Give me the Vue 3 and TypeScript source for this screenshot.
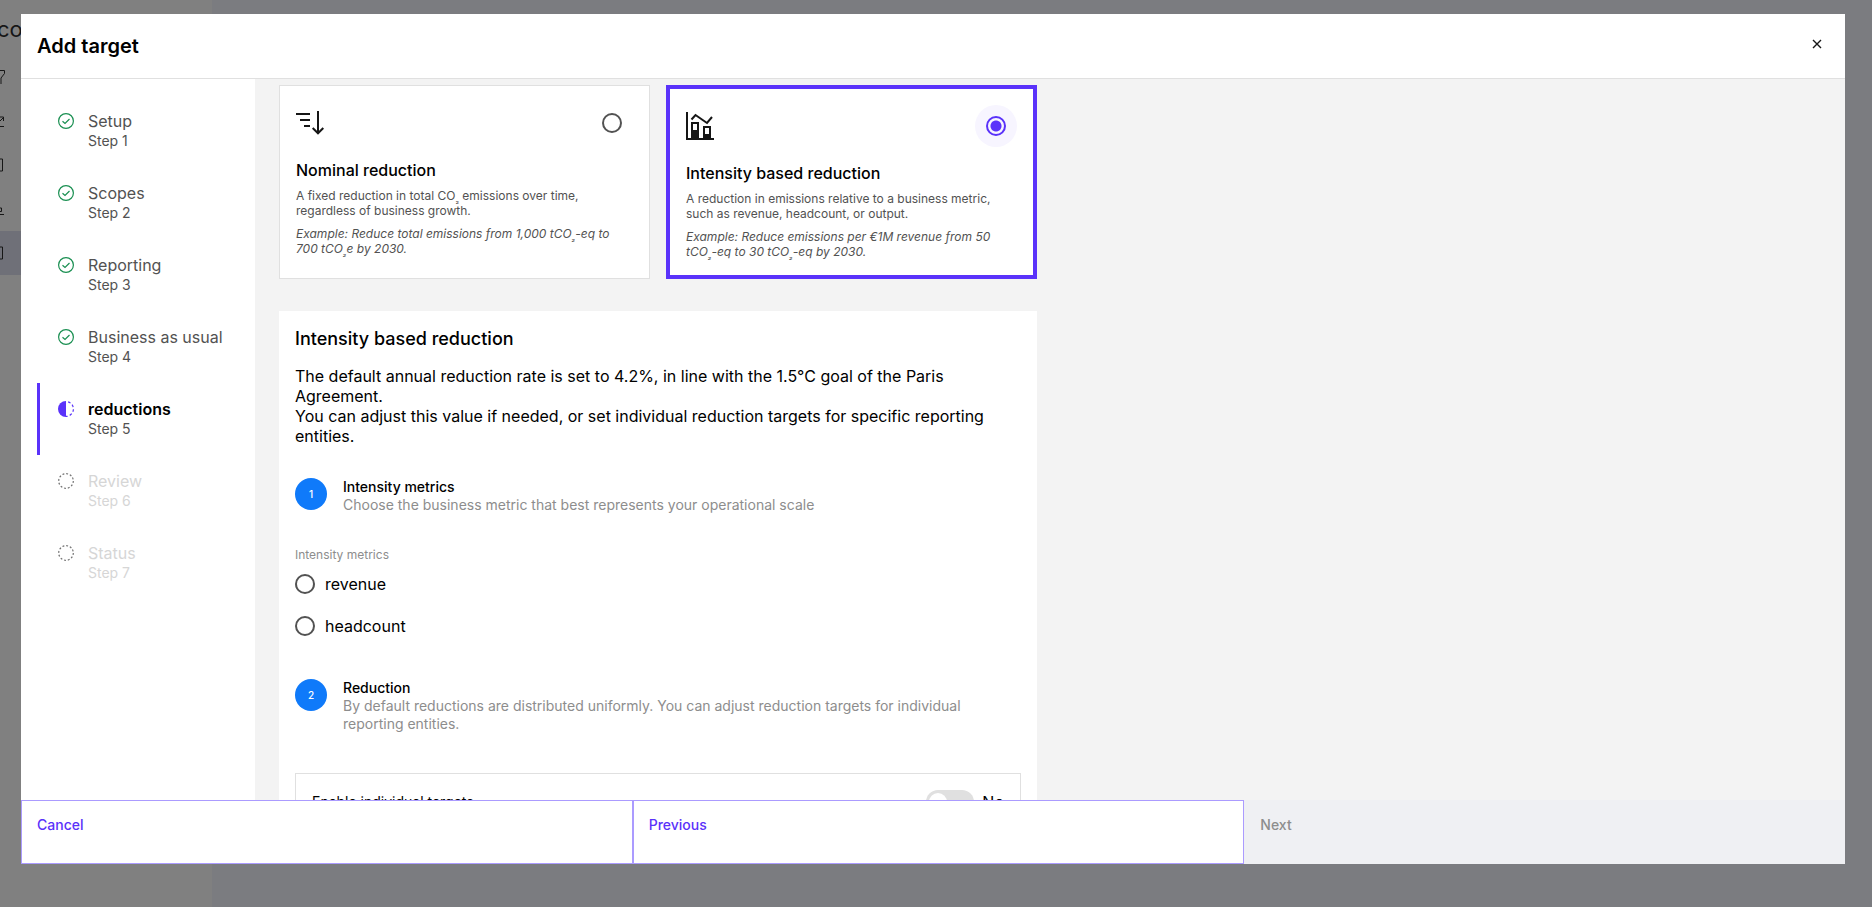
<script setup lang="ts">
import { ref } from 'vue'

type StepState = 'done' | 'current' | 'todo'

interface Step {
  title: string
  state: StepState
}

const steps: Step[] = [
  { title: 'Setup', state: 'done' },
  { title: 'Scopes', state: 'done' },
  { title: 'Reporting', state: 'done' },
  { title: 'Business as usual', state: 'done' },
  { title: 'reductions', state: 'current' },
  { title: 'Review', state: 'todo' },
  { title: 'Status', state: 'todo' },
]

const metrics: string[] = ['revenue', 'headcount']

const reductionType = ref<'nominal' | 'intensity'>('intensity')
const metric = ref<string>('')
const individual = ref<boolean>(false)
</script>

<template>
  <div class="page">
    <aside class="rail">
      <div class="brand">co</div>
      <div class="rail-item">
        <svg width="6" height="16" viewBox="0 0 6 16"><path d="M0 1.500h4.500v3L1 9v6" /></svg>
      </div>
      <div class="rail-item">
        <svg width="6" height="16" viewBox="0 0 6 16"><path d="M0 8l3.500-3.500M0 4h3.500v4M0 13.500h4" /></svg>
      </div>
      <div class="rail-item">
        <svg width="6" height="16" viewBox="0 0 6 16"><path d="M0 2h2.500v12H0" /></svg>
      </div>
      <div class="rail-item">
        <svg width="6" height="16" viewBox="0 0 6 16"><path d="M0 7h1.500v3.500H0M0 13.500h4" /></svg>
      </div>
      <div class="rail-item active">
        <svg width="6" height="16" viewBox="0 0 6 16"><path d="M0 2h2.500v12H0" /></svg>
      </div>
    </aside>
    <div class="backdrop-main"></div>
  </div>

  <div class="overlay">
    <section class="modal" role="dialog" aria-labelledby="dialog-title">
      <header class="modal-header">
        <h1 id="dialog-title">Add target</h1>
        <button class="close" type="button" aria-label="Close">
          <svg width="10" height="10" viewBox="0 0 10 10"><path d="M1 1l8 8M9 1l-8 8" /></svg>
        </button>
      </header>

      <div class="modal-body">
        <nav class="steps">
          <a v-for="(step, i) in steps" :key="step.title" href="#" class="step" :class="step.state">
            <svg class="step-icon" width="16" height="16" viewBox="0 0 16 16">
              <template v-if="step.state === 'done'">
                <circle cx="8" cy="8" r="7.400" />
                <path d="M4.500 8.200l2.500 2.300 4.500-4.500" />
              </template>
              <template v-else-if="step.state === 'current'">
                <path class="solid" d="M8 0a8 8 0 0 0 0 16z" />
                <path d="M8 .6a7.400 7.400 0 0 1 0 14.800" stroke-dasharray="2.600 2.200" stroke-dashoffset="-2.200" />
              </template>
              <circle v-else cx="8" cy="8" r="7.300" stroke-dasharray="1.900 1.920" />
            </svg>
            <span class="step-text">
              <span class="step-title">{{ step.title }}</span>
              <span class="step-sub">Step {{ i + 1 }}</span>
            </span>
          </a>
        </nav>

        <main class="content">
          <div class="column">
            <div class="cards">
              <label class="card" :class="{ selected: reductionType === 'nominal' }">
                <span class="card-top">
                  <svg width="32" height="32" viewBox="0 0 32 32" fill="none" stroke="#161616" stroke-width="2">
                    <path d="M0 7h14M4 13h10M8 19h6" />
                    <path d="M22 4v22M16.700 21l5.300 5.300L27.300 21" />
                  </svg>
                  <span class="radio-halo">
                    <input v-model="reductionType" class="radio" type="radio" name="type" value="nominal" />
                  </span>
                </span>
                <span class="card-title">Nominal reduction</span>
                <span class="card-text">A fixed reduction in total CO<sub>₂</sub> emissions over time, regardless of business growth.</span>
                <span class="card-text example">Example: Reduce total emissions from 1,000 tCO<sub>₂</sub>-eq to 700 tCO<sub>₂</sub>e by 2030.</span>
              </label>

              <label class="card" :class="{ selected: reductionType === 'intensity' }">
                <span class="card-top">
                  <svg width="32" height="32" viewBox="0 0 32 32" fill="none" stroke="#161616" stroke-width="2">
                    <path d="M1 2v27h27" />
                    <path d="M5.500 9.500l4-4.500 11.500 8 5-6" />
                    <path d="M6 29V13h6v16M18 29V17h6v12" />
                    <path d="M5 20h8v9H5zM17 24h8v5h-8z" fill="#161616" stroke="none" />
                  </svg>
                  <span class="radio-halo">
                    <input v-model="reductionType" class="radio" type="radio" name="type" value="intensity" />
                  </span>
                </span>
                <span class="card-title">Intensity based reduction</span>
                <span class="card-text">A reduction in emissions relative to a business metric, such as revenue, headcount, or output.</span>
                <span class="card-text example">Example: Reduce emissions per €1M revenue from 50 tCO<sub>₂</sub>-eq to 30 tCO<sub>₂</sub>-eq by 2030.</span>
              </label>
            </div>

            <section class="panel">
              <h2>Intensity based reduction</h2>
              <p class="intro">
                The default annual reduction rate is set to 4.2%, in line with the 1.5°C goal of the Paris Agreement.<br />
                You can adjust this value if needed, or set individual reduction targets for specific reporting entities.
              </p>

              <div class="stage">
                <span class="badge">1</span>
                <div>
                  <h3>Intensity metrics</h3>
                  <p>Choose the business metric that best represents your operational scale</p>
                </div>
              </div>

              <fieldset class="metrics">
                <legend>Intensity metrics</legend>
                <label v-for="m in metrics" :key="m" class="metric">
                  <input v-model="metric" class="radio" type="radio" name="metric" :value="m" />
                  {{ m }}
                </label>
              </fieldset>

              <div class="stage">
                <span class="badge">2</span>
                <div>
                  <h3>Reduction</h3>
                  <p>By default reductions are distributed uniformly. You can adjust reduction targets for individual reporting entities.</p>
                </div>
              </div>

              <div class="toggle-box">
                <label for="individual" class="toggle-label">Enable individual targets</label>
                <span class="toggle">
                  <input id="individual" v-model="individual" class="switch" type="checkbox" role="switch" />
                  <span>{{ individual ? 'Yes' : 'No' }}</span>
                </span>
              </div>
            </section>
          </div>
        </main>
      </div>

      <footer class="modal-footer">
        <button class="action" type="button">Cancel</button>
        <button class="action" type="button">Previous</button>
        <button class="action" type="button" disabled>Next</button>
      </footer>
    </section>
  </div>
</template>

<style>
body {
  margin: 0;
  overflow: hidden;
}
</style>

<style scoped>
* {
  box-sizing: border-box;
}

.page,
.overlay {
  font-family: Inter, 'Liberation Sans', sans-serif;
  font-size: 16px;
  line-height: 20px;
  color: #000;
}

.page {
  display: flex;
  height: 100vh;
}

.rail {
  width: 212px;
  background: #808080;
  color: #161616;
  overflow: hidden;
}

.brand {
  height: 55px;
  padding-top: 19px;
  margin-left: -3px;
  font-size: 22px;
}

.rail-item {
  display: flex;
  align-items: center;
  height: 44px;
}

.rail-item svg {
  fill: none;
  stroke: #161616;
}

.rail-item.active {
  background: #6f7078;
}

.backdrop-main {
  flex: 1;
  background: #7b7c80;
}

.overlay {
  position: fixed;
  inset: 0;
  padding: 14px 27px 43px 21px;
}

.modal {
  display: flex;
  flex-direction: column;
  height: 100%;
  background: #fff;
  overflow: hidden;
}

.modal-header {
  display: flex;
  justify-content: space-between;
  padding: 16px;
  border-bottom: 1px solid #e0e0e0;
}

h1 {
  margin: 0;
  font-size: 20px;
  line-height: 32px;
  font-weight: 600;
}

.close {
  display: flex;
  align-items: center;
  justify-content: center;
  width: 24px;
  height: 28px;
  padding: 0;
  border: 0;
  background: none;
}

.close svg {
  fill: none;
  stroke: #161616;
  stroke-width: 1.4;
}

.modal-body {
  display: flex;
  flex: 1;
  min-height: 0;
}

.steps {
  flex: none;
  width: 234px;
  padding: 16px;
}

.step {
  display: flex;
  gap: 14px;
  height: 72px;
  padding: 16px 0 0 18px;
  border-left: 3px solid transparent;
  color: #525252;
  text-decoration: none;
  white-space: nowrap;
}

.step-icon {
  flex: none;
  margin-top: 2px;
  fill: none;
  stroke: #198f51;
  stroke-width: 1.2;
}

.step-title,
.step-sub {
  display: block;
}

.step-sub {
  font-size: 14px;
}

.step.current {
  border-color: #5a32fa;
}

.step.current .step-icon {
  stroke: #5a32fa;
}

.step.current .solid {
  fill: #5a32fa;
  stroke: none;
}

.step.current .step-title {
  color: #000;
  font-weight: 600;
}

.step.todo {
  color: #d6d6d6;
}

.step.todo .step-icon {
  stroke: #6f6f6f;
}

.content {
  flex: 1;
  min-width: 0;
  padding: 6px 24px 0;
  background: #f3f3f3;
  overflow: auto;
  scrollbar-width: none;
}

.column {
  max-width: 758px;
}

.cards {
  display: grid;
  grid-template-columns: 1fr 1fr;
  gap: 16px;
  margin-bottom: 32px;
}

.card {
  padding: 16px;
  border: 1px solid #e0e0e0;
  background: #fff;
}

.card.selected {
  border: 4px solid #5a32fa;
}

.card-top {
  display: flex;
  align-items: center;
  justify-content: space-between;
  margin-bottom: 16px;
}

.radio-halo {
  display: flex;
  align-items: center;
  justify-content: center;
  width: 42px;
  height: 42px;
  border-radius: 50%;
}

.selected .radio-halo {
  background: #f7f5ff;
}

.radio {
  appearance: none;
  flex: none;
  width: 20px;
  height: 20px;
  margin: 0;
  border: 2px solid #525252;
  border-radius: 50%;
}

.radio:checked {
  border-color: #5a32fa;
  background: radial-gradient(circle, #5a32fa 5px, transparent 6px);
}

.card-title {
  display: block;
  font-weight: 500;
}

.card-text {
  display: block;
  margin-top: 8px;
  font-size: 12px;
  line-height: 15px;
  color: #525252;
}

.example {
  font-style: italic;
}

sub {
  font-size: 8px;
  line-height: 0;
}

.panel {
  padding: 16px;
  background: #fff;
}

h2 {
  margin: 0 0 15px;
  font-size: 18px;
  line-height: 24px;
  font-weight: 500;
}

.intro {
  margin: 0 0 32px;
}

.stage {
  display: flex;
  gap: 16px;
  font-size: 14px;
  line-height: 18px;
}

.badge {
  flex: none;
  width: 32px;
  height: 32px;
  border-radius: 50%;
  background: #0f7afa;
  color: #fff;
  font-size: 10px;
  line-height: 32px;
  font-weight: 500;
  text-align: center;
}

h3 {
  margin: 0;
  font-size: 14px;
  font-weight: 500;
}

.stage p {
  margin: 0;
  color: #8d8d8d;
}

.metrics {
  margin: 32px 0;
  padding: 0;
  border: 0;
}

legend {
  padding: 0;
  font-size: 12px;
  line-height: 17px;
  color: #8d8d8d;
}

.metric {
  display: flex;
  align-items: center;
  gap: 10px;
  height: 42px;
}

.toggle-box {
  display: flex;
  align-items: center;
  justify-content: space-between;
  margin-top: 40px;
  padding: 16px;
  border: 1px solid #e0e0e0;
}

.toggle-label {
  font-size: 14px;
}

.toggle {
  display: flex;
  align-items: center;
  gap: 8px;
}

.switch {
  appearance: none;
  width: 48px;
  height: 24px;
  margin: 0;
  padding: 3px;
  border-radius: 12px;
  background: #e0e0e0;
}

.switch::before {
  content: '';
  display: block;
  width: 18px;
  height: 18px;
  border-radius: 50%;
  background: #fff;
}

.switch:checked {
  padding-left: 27px;
  background: #5a32fa;
}

.modal-footer {
  display: grid;
  flex: none;
  grid-template-columns: repeat(3, 1fr);
  width: calc(100% + 11px);
  height: 64px;
}

.action {
  display: flex;
  align-items: flex-start;
  padding: 15px;
  border: 1px solid #ab9bff;
  background: #fff;
  color: #5a32fa;
  font-family: inherit;
  font-size: 14px;
  line-height: 18px;
  font-weight: 500;
}

.action:disabled {
  border-color: #eff0f3;
  background: #eff0f3;
  color: #8d8d8d;
}
</style>
